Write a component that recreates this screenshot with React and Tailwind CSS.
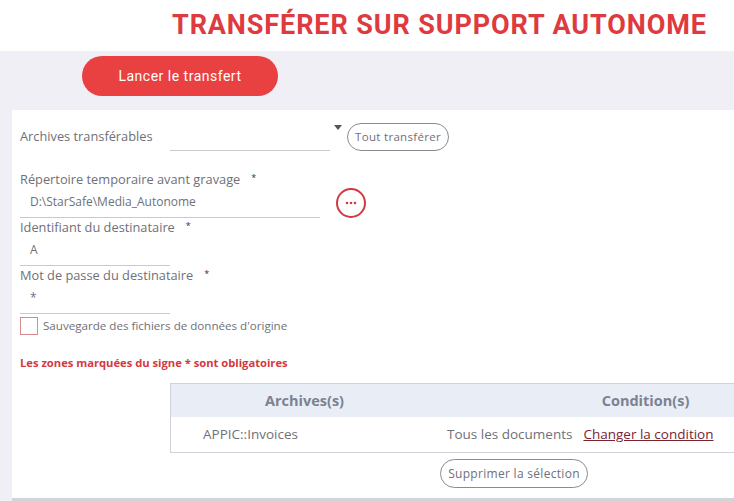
import React from 'react';

const FONT = { fontFamily: '"Open Sans", Lato, sans-serif' };
const TITLE_FONT = { fontFamily: 'Roboto, "Liberation Sans", sans-serif' };

function Field({ label, value, width, children }) {
  return (
    <div>
      <div className="h-[20px] flex items-center text-[12.8px] text-[#6f7079]">
        {label}
        <span className="ml-[11px] text-[9px] text-[#333] -mt-[4px]">*</span>
      </div>
      <div className="flex h-[28px]">
        <div className={`${width} border-b border-[#c9c9cf] pl-[10px] pb-[3px] text-[12px] text-[#6f7079] flex items-center`}>
          {value}
        </div>
        {children}
      </div>
    </div>
  );
}

export default function App() {
  return (
    <div className="w-[734px] h-[501px] overflow-hidden bg-white" style={FONT}>
      <header className="h-[51px] flex items-center pl-[172px]">
        <h1 className="text-[27px] font-bold text-[#dd3b3f] tracking-[0.9px] whitespace-nowrap" style={TITLE_FONT}>
          TRANSFÉRER SUR SUPPORT AUTONOME
        </h1>
      </header>

      <div className="h-[59px] bg-[#efeff5] pl-[82px] pt-[5px]">
        <button className="w-[196px] h-[40px] rounded-full bg-[#e94141] text-white text-[14px] tracking-[0.5px]" style={TITLE_FONT}>
          Lancer le transfert
        </button>
      </div>

      <div className="flex bg-[#efeff5] h-[391px]">
        <div className="w-[12px] shrink-0" />
        <div className="flex-1 min-w-0 bg-white border-b-[3px] border-[#d3d3da] pl-[8px] overflow-hidden">
          <div className="flex items-center h-[52px] pt-[1px]">
            <span className="w-[150px] text-[12.8px] text-[#6f7079]">Archives transférables</span>
            <div className="w-[160px] h-[30px] border-b border-[#c9c9cf] -mt-[2px]" />
            <svg width="10" height="6" viewBox="0 0 10 6" className="ml-[3px] mb-[18px]">
              <path d="M1 0 L9 0 L5 5 Z" fill="#555" />
            </svg>
            <button className="ml-[4px] w-[102px] h-[28px] rounded-full border border-[#8a8a92] text-[11.5px] text-[#6f7079] tracking-[0.3px]">
              Tout transférer
            </button>
          </div>

          <div className="mt-[8px]">
            <Field label="Répertoire temporaire avant gravage" value="D:\StarSafe\Media_Autonome" width="w-[300px]">
              <div className="ml-[16px] mt-[-2px] w-[30px] h-[30px] rounded-full border-2 border-[#d0393f] flex items-center justify-center">
                <svg width="12" height="4" viewBox="0 0 12 4">
                  <circle cx="2" cy="2" r="1.3" fill="#d0393f" />
                  <circle cx="6" cy="2" r="1.3" fill="#d0393f" />
                  <circle cx="10" cy="2" r="1.3" fill="#d0393f" />
                </svg>
              </div>
            </Field>
            <Field label="Identifiant du destinataire" value="A" width="w-[150px]" />
            <Field label="Mot de passe du destinataire" value="*" width="w-[150px]" />
          </div>

          <div className="flex items-center mt-[3px] h-[18px]">
            <div className="w-[18px] h-[18px] border border-[#d88a8f]" />
            <span className="ml-[5px] text-[11.6px] text-[#6f7079]">Sauvegarde des fichiers de données d'origine</span>
          </div>

          <div className="mt-[21px] h-[15px] flex items-center text-[11.2px] font-bold text-[#d23a3f]">
            Les zones marquées du signe * sont obligatoires
          </div>

          <div className="ml-[150px] mt-[12px] w-[683px] border border-[#cfd2d8] border-r-0">
            <div className="h-[33px] bg-[#e9edf5] flex items-center text-[14.5px] font-bold text-[#7b8292]">
              <div className="w-[267px] text-center">Archives(s)</div>
              <div className="flex-1 text-center">Condition(s)</div>
            </div>
            <div className="h-[35px] flex items-center text-[13.5px] text-[#6f7079]">
              <div className="w-[267px] pl-[32px]">APPIC::Invoices</div>
              <span className="ml-[9px]">Tous les documents</span>
              <a className="ml-[11px] underline text-[#7a2430]">Changer la condition</a>
            </div>
          </div>

          <div className="flex mt-[6px] pl-[420px]">
            <button className="w-[148px] h-[29px] rounded-full border border-[#8a8a92] text-[12px] text-[#6f7079] tracking-[0.3px]">
              Supprimer la sélection
            </button>
          </div>
        </div>
      </div>
    </div>
  );
}
